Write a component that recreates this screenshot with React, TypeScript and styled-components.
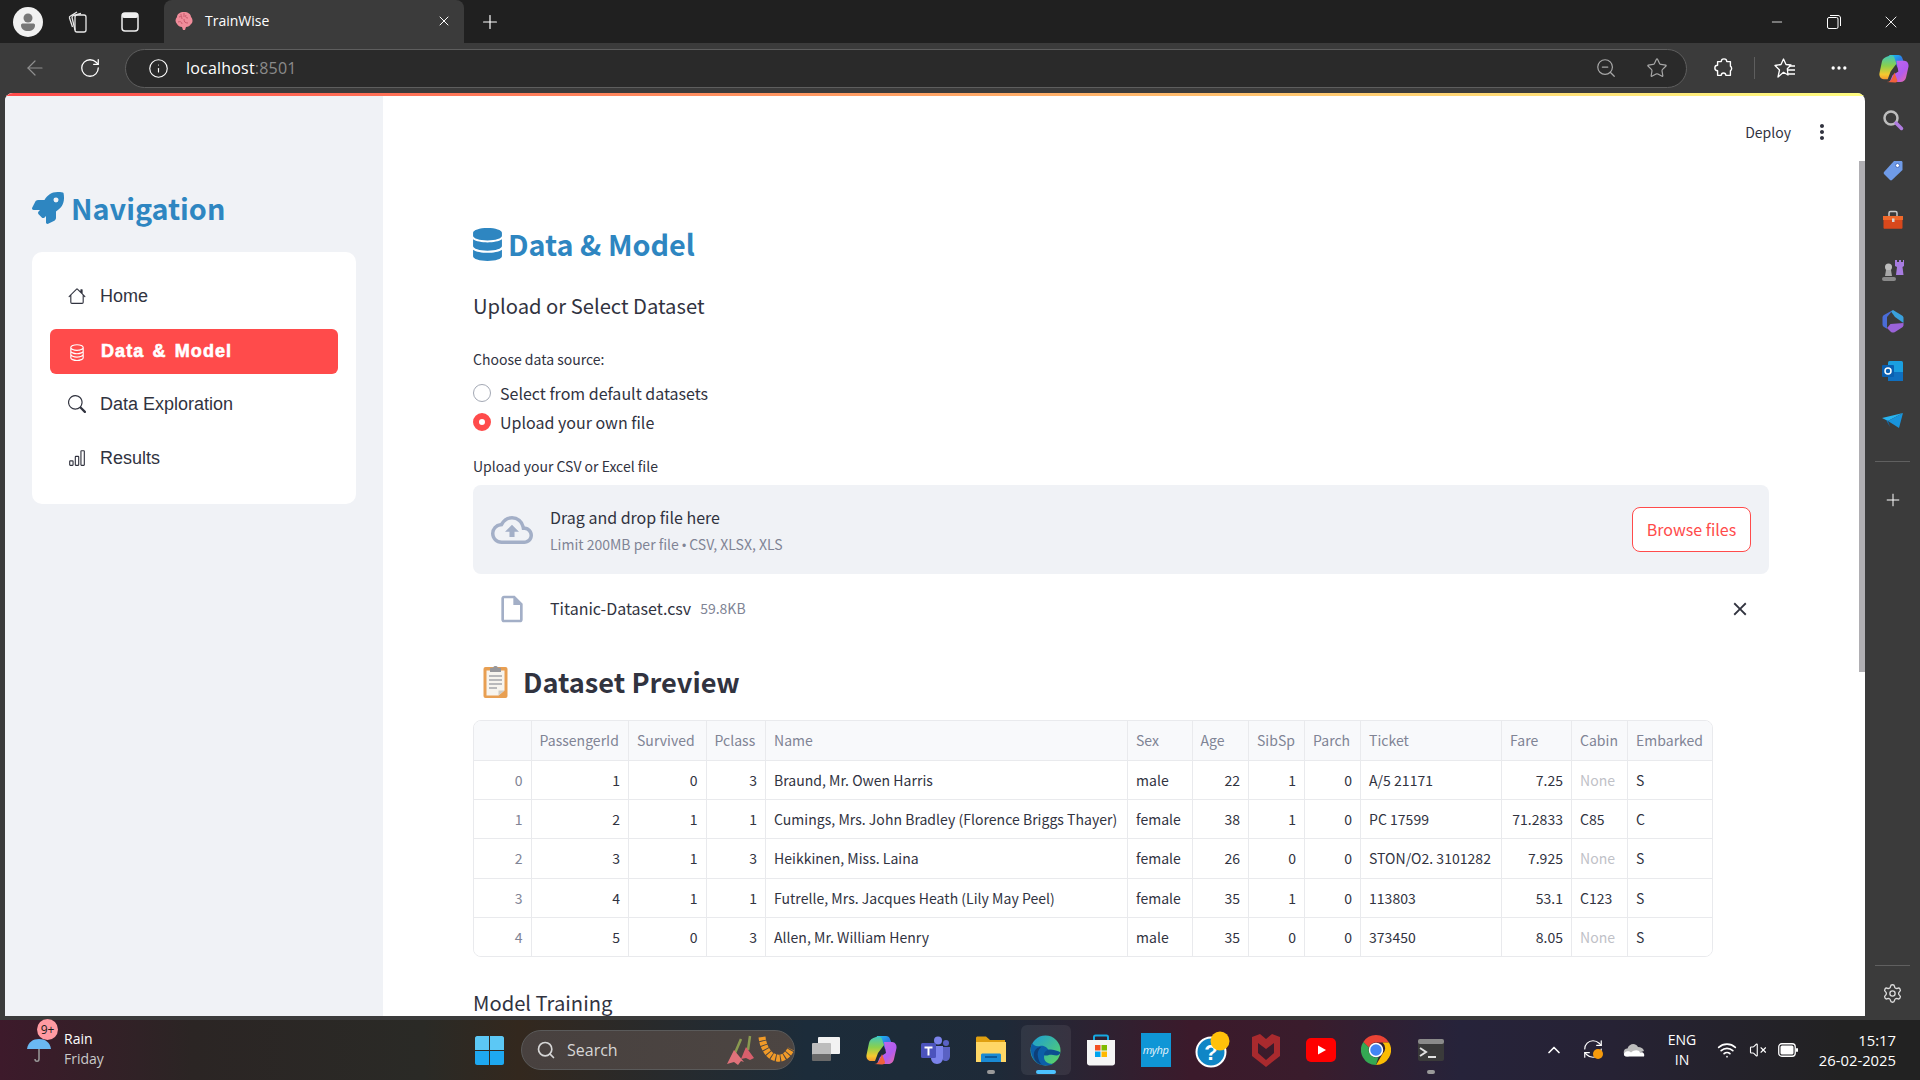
import styled, { createGlobalStyle } from 'styled-components';
import {
  ArrowLeft,
  ChevronUp,
  Info,
  Minus,
  MoreHorizontal,
  Plus,
  RefreshCw,
  RotateCw,
  Search,
  Settings,
  Star,
  VolumeX,
  Wifi,
  X,
  ZoomOut,
} from 'lucide-react';
import { BsBarChart, BsDatabase, BsHouse, BsSearch } from 'react-icons/bs';
import { FaDatabase, FaRocket } from 'react-icons/fa';
import { MdClose, MdMoreVert, MdOutlineCloudUpload, MdOutlineInsertDriveFile } from 'react-icons/md';

const SOURCE = '"Noto Sans CJK SC", "Noto Sans", sans-serif';
const SEGOE = '"Open Sans", "Noto Sans", sans-serif';
const COLS = '57.5px 97.5px 77.5px 59.5px 362px 64.5px 56.5px 56px 56px 141px 70px 56px 1fr';

const GlobalStyle = createGlobalStyle`
  * { box-sizing: border-box; }
  html, body { margin: 0; padding: 0; background: #202020; }
`;

const Screen = styled.div`
  width: 1920px;
  height: 1080px;
  display: flex;
  flex-direction: column;
  overflow: hidden;
  background: #3b3b3b;
`;

/* browser chrome */
const TitleBar = styled.div`
  height: 43px;
  flex: none;
  display: flex;
  align-items: center;
  padding-left: 3px;
  background: #202020;
  color: #fff;
`;

const Slot = styled.div<{ $w: number }>`
  width: ${(p) => p.$w}px;
  height: 100%;
  flex: none;
  display: flex;
  align-items: center;
  justify-content: center;
`;

const Avatar = styled.div`
  width: 30px;
  height: 30px;
  border-radius: 50%;
  background: #f1f1f1;
  display: flex;
  align-items: center;
  justify-content: center;
`;

const Tab = styled.div`
  width: 300px;
  height: 43px;
  margin-left: 7px;
  padding: 0 12px 2px 10px;
  display: flex;
  align-items: center;
  background: #3b3b3b;
  border-radius: 8px 8px 0 0;
  font: 400 14px ${SEGOE};
`;

const TabTitle = styled.span`
  margin-left: 11px;
  flex: 1;
`;

const WindowControls = styled.div`
  margin-left: auto;
  height: 100%;
  display: flex;
`;

const Toolbar = styled.div`
  height: 50px;
  flex: none;
  padding-left: 7.5px;
  display: flex;
  align-items: center;
  background: #3b3b3b;
  color: #fff;
`;

const AddressBar = styled.div`
  width: 1562px;
  height: 39px;
  margin: 0 10px 0 7.5px;
  padding: 0 18px 0 22px;
  flex: none;
  display: flex;
  align-items: center;
  background: #2a2a2a;
  border: 1px solid #5e5e5e;
  border-radius: 20px;
`;

const Url = styled.div`
  margin-left: 17px;
  font: 400 16px ${SEGOE};
  letter-spacing: 0.2px;
  color: #fff;
`;

const UrlPort = styled.span`
  color: #8a8a8a;
`;

const AddressActions = styled.div`
  margin-left: auto;
  display: flex;
  align-items: center;
  gap: 29px;
  color: #a8a8a8;
`;

const ToolDivider = styled.div`
  width: 7px;
  height: 22px;
  flex: none;
  display: flex;
  justify-content: center;

  &::before {
    content: '';
    width: 1px;
    background: #5e5e5e;
  }
`;

const Body = styled.div`
  height: 923px;
  flex: none;
  display: flex;
`;

const Viewport = styled.div`
  position: relative;
  width: 1860px;
  margin-left: 5px;
  flex: none;
  display: flex;
  background: #fff;
  border-radius: 8px 8px 0 0;
  overflow: hidden;

  &::before {
    content: '';
    position: absolute;
    top: 0;
    left: 0;
    right: 0;
    height: 3px;
    background: linear-gradient(90deg, #ff4b4b, #fffd80);
    z-index: 2;
  }
`;

const Scrollbar = styled.div`
  position: absolute;
  top: 68px;
  right: 0;
  width: 6px;
  height: 511px;
  background: #b0afb3;
`;

const Rail = styled.div`
  width: 55px;
  flex: none;
  padding-top: 2px;
  display: flex;
  flex-direction: column;
  align-items: center;
  color: #fff;
`;

const RailSlot = styled.div<{ $h?: number; $top?: number }>`
  width: 100%;
  height: ${(p) => p.$h ?? 50.2}px;
  margin-top: ${(p) => p.$top ?? 0}px;
  flex: none;
  display: flex;
  align-items: center;
  justify-content: center;
`;

const RailRule = styled.div<{ $top?: number; $bottom?: number }>`
  width: 35px;
  height: 1px;
  flex: none;
  margin: ${(p) => p.$top ?? 0}px 0 ${(p) => p.$bottom ?? 0}px;
  background: #606060;
`;

const RailSpacer = styled.div`
  flex: 1;
`;

/* sidebar */
const Sidebar = styled.aside`
  width: 378px;
  flex: none;
  padding: 90px 27px 0;
  background: #f0f2f6;
`;

const SideTitle = styled.h2`
  margin: 0;
  height: 52px;
  padding-bottom: 3px;
  display: flex;
  align-items: center;
  gap: 7px;
  font: 700 28.8px/49px ${SOURCE};
  color: #2e86c1;
`;

const NavCard = styled.nav`
  margin-top: 17px;
  height: 252px;
  padding: 22px 18px 0;
  display: flex;
  flex-direction: column;
  background: #fff;
  border-radius: 10px;
`;

const NavItem = styled.div<{ $active?: boolean; $top?: number }>`
  height: ${(p) => (p.$active ? 45 : 44)}px;
  margin-top: ${(p) => p.$top ?? 0}px;
  flex: none;
  padding-left: 18px;
  display: flex;
  align-items: center;
  gap: ${(p) => (p.$active ? 15 : 14)}px;
  border-radius: 6px;
  font: ${(p) => (p.$active ? 700 : 400)} 18px 'Liberation Sans', Arial, sans-serif;
  letter-spacing: ${(p) => (p.$active ? '1.1px' : '0')};
  word-spacing: ${(p) => (p.$active ? '2px' : '0')};
  -webkit-text-stroke: ${(p) => (p.$active ? '0.6px #fff' : '0')};
  color: ${(p) => (p.$active ? '#fff' : '#31333f')};
  background: ${(p) => (p.$active ? '#ff4b4b' : 'transparent')};
`;

/* main column */
const Main = styled.main`
  flex: 1;
  min-width: 0;
  padding: 0 96px 0 90px;
  font-family: ${SOURCE};
  color: #31333f;
`;

const TopBar = styled.div`
  height: 80px;
  margin-right: -96px;
  padding: 0 31px 2px 0;
  display: flex;
  align-items: center;
  justify-content: flex-end;
  gap: 19px;
  font-size: 14px;
`;

const PageTitle = styled.h1`
  margin: 52px 0 0;
  height: 40px;
  padding-bottom: 2px;
  display: flex;
  align-items: center;
  gap: 4px;
  font: 700 28.8px/38px ${SOURCE};
  color: #2e86c1;

  svg {
    margin-left: -2px;
  }
`;

const SectionTitle = styled.h3<{ $top: number }>`
  margin: ${(p) => p.$top}px 0 0;
  font: 400 20.2px/31px ${SOURCE};
  color: #31333f;
`;

const FieldLabel = styled.div<{ $top: number }>`
  margin-top: ${(p) => p.$top}px;
  font-size: 14px;
  line-height: 19px;
`;

const RadioGroup = styled.div`
  margin-top: 9px;
`;

const RadioRow = styled.div`
  height: 29px;
  display: flex;
  align-items: center;
  gap: 9px;
  font-size: 16px;
`;

const RadioDot = styled.span<{ $on?: boolean }>`
  width: 18px;
  height: 18px;
  flex: none;
  border-radius: 50%;
  background: #fff;
  border: ${(p) => (p.$on ? '6px solid #ff4b4b' : '1px solid #a3a8b4')};
`;

const DropZone = styled.div`
  margin-top: 9px;
  height: 89px;
  padding: 0 18px;
  display: flex;
  align-items: center;
  background: #f0f2f6;
  border-radius: 8px;
`;

const DropText = styled.div`
  margin-left: 17px;
  padding-top: 2px;
  flex: 1;
`;

const DropTitle = styled.div`
  font-size: 16px;
  line-height: 23px;
`;

const DropHint = styled.div`
  margin-top: 5px;
  font-size: 14px;
  line-height: 20px;
  color: #808495;
`;

const Bullet = styled.span`
  font-family: 'Liberation Sans', sans-serif;
  font-size: 12px;
`;

const BrowseButton = styled.button`
  width: 119px;
  height: 45px;
  padding: 0 0 2px;
  background: #fff;
  border: 1px solid #ff4b4b;
  border-radius: 8px;
  font: 400 16px ${SOURCE};
  color: #ff4b4b;
`;

const FileRow = styled.div`
  margin-top: 17px;
  height: 36px;
  padding: 0 18px 0 23px;
  display: flex;
  align-items: center;
`;

const FileName = styled.span`
  margin-left: 22px;
  padding-bottom: 3px;
  font-size: 16px;
`;

const FileSize = styled.span`
  margin-left: 9px;
  padding-bottom: 3px;
  font-size: 14px;
  color: #808495;
`;

const FileClose = styled.span`
  margin-left: auto;
  display: flex;
`;

const PreviewTitle = styled.h2`
  margin: 32px 0 0;
  height: 44px;
  padding-left: 10px;
  display: flex;
  align-items: center;
  gap: 15px;
  font: 600 27.2px/42px ${SOURCE};
  color: #31333f;
`;

const DataTable = styled.div`
  margin-top: 17px;
  width: 1240px;
  height: 237px;
  border: 1px solid #e9eaed;
  border-radius: 8px;
  overflow: hidden;
  font-size: 14px;
`;

const TableRow = styled.div<{ $head?: boolean }>`
  display: grid;
  grid-template-columns: ${COLS};
  height: ${(p) => (p.$head ? '40px' : '39.2px')};
  background: ${(p) => (p.$head ? '#f8f9fb' : '#fff')};
  border-bottom: 1px solid #e9eaed;

  &:last-child {
    border-bottom: 0;
  }
`;

const Cell = styled.div<{ $num?: boolean; $muted?: boolean; $none?: boolean; $head?: boolean }>`
  padding: ${(p) => (p.$head ? '0 8px 2px' : '0 8px')};
  display: flex;
  align-items: center;
  justify-content: ${(p) => (p.$num ? 'flex-end' : 'flex-start')};
  white-space: nowrap;
  overflow: hidden;
  letter-spacing: 0.03px;
  border-right: 1px solid #e9eaed;
  color: ${(p) => (p.$none ? '#bfc1c7' : p.$muted ? '#808495' : '#31333f')};

  &:last-child {
    border-right: 0;
  }
`;

/* taskbar */
const BottomEdge = styled.div`
  height: 4px;
  flex: none;
  background: #3b3b3b;
`;

const Taskbar = styled.footer`
  height: 60px;
  flex: none;
  display: flex;
  align-items: center;
  padding-right: 24px;
  color: #fff;
  font-family: ${SEGOE};
  background: linear-gradient(
    90deg,
    #3d1a2b 0%,
    #2b2524 10%,
    #2a2a26 22%,
    #33281e 27%,
    #1c2c3a 42%,
    #1e2a38 52%,
    #3b1a2b 62%,
    #3a1c2c 68%,
    #26233a 76%,
    #262234 84%,
    #222222 96%
  );
`;

const Weather = styled.div`
  position: relative;
  width: 475px;
  flex: none;
  padding-left: 26px;
  display: flex;
  align-items: center;
  gap: 12px;
`;

const WeatherBadge = styled.span`
  position: absolute;
  left: 37px;
  top: -12px;
  width: 21px;
  height: 21px;
  border-radius: 50%;
  background: #ff9aa2;
  color: #1a1a1a;
  font-size: 12px;
  line-height: 21px;
  text-align: center;
`;

const WeatherText = styled.div`
  font-size: 14px;
  line-height: 20px;
  margin-top: -2px;
`;

const Dim = styled.div`
  color: #c9c9c9;
`;

const SearchPill = styled.div`
  width: 274px;
  height: 40px;
  margin-left: 17px;
  padding: 0 0 0 14px;
  flex: none;
  display: flex;
  align-items: center;
  gap: 11px;
  border-radius: 20px;
  border: 1px solid #5a5a5a;
  background: linear-gradient(90deg, #48413f, #4c4542);
  font-size: 16px;
  color: #d6d6d6;
`;

const SearchArt = styled.span`
  margin-left: auto;
  display: flex;
`;

const TaskIcons = styled.div`
  margin-left: 3px;
  display: flex;
`;

const TaskSlot = styled.div<{ $active?: boolean; $dot?: boolean }>`
  position: relative;
  width: 55px;
  height: 50px;
  flex: none;
  display: flex;
  align-items: center;
  justify-content: center;
  border-radius: 6px;

  &::before {
    content: '';
    position: absolute;
    inset: 0 2.5px;
    border-radius: 6px;
    background: ${(p) => (p.$active ? 'rgba(255,255,255,0.07)' : 'transparent')};
  }

  &::after {
    content: '';
    display: ${(p) => (p.$active || p.$dot ? 'block' : 'none')};
    position: absolute;
    left: 50%;
    bottom: 1px;
    width: ${(p) => (p.$active ? '20px' : '8px')};
    height: 4px;
    border-radius: 2px;
    transform: translateX(-50%);
    background: ${(p) => (p.$active ? '#4cc2ff' : '#9a9a9a')};
  }

  svg {
    position: relative;
  }
`;

const Tray = styled.div`
  margin-left: auto;
  height: 100%;
  display: flex;
  align-items: center;
`;

const TrayLabel = styled.div`
  font-size: 14px;
  line-height: 20px;
  text-align: center;
`;

const Clock = styled.div`
  width: 92px;
  font-size: 14.8px;
  line-height: 20px;
  text-align: right;
`;

/* drawings */
function CopilotIcon({ id, size }: { id: string; size: number }) {
  return (
    <svg width={size} height={size} viewBox="0 0 32 32">
      <defs>
        <linearGradient id={`${id}a`} x1="0" y1="0" x2="1" y2="1">
          <stop offset="0" stopColor="#19c8ef" />
          <stop offset="0.5" stopColor="#2a7fe8" />
          <stop offset="1" stopColor="#7a55e0" />
        </linearGradient>
        <linearGradient id={`${id}b`} x1="0" y1="0" x2="0" y2="1">
          <stop offset="0" stopColor="#3fc7c0" />
          <stop offset="0.45" stopColor="#8bd04c" />
          <stop offset="0.8" stopColor="#f5c92f" />
          <stop offset="1" stopColor="#f59a2f" />
        </linearGradient>
        <linearGradient id={`${id}c`} x1="0" y1="0" x2="1" y2="1">
          <stop offset="0" stopColor="#c46be8" />
          <stop offset="0.6" stopColor="#b15cf0" />
          <stop offset="1" stopColor="#f06a9a" />
        </linearGradient>
      </defs>
      <path d="M12 2h9c2 0 3.500 1 4 3l3 8-8 2-3-8c-.6-1.600-1.500-2.500-5-3z" fill={`url(#${id}a)`} />
      <path d="M11 3c2-1.500 5-1 6 2l2 6-6 8-3 8H6c-3 0-5-2.500-4.500-6L4 9c.5-3 3-5 7-6z" fill={`url(#${id}b)`} />
      <path d="M19 8h8c3 0 5 3 4.500 6L29 25c-.5 3-3 5-6 5H12l3-7 6-4z" fill={`url(#${id}c)`} />
      <path d="M9 30c3 0 5-2 6-5l2-5 3 8c.5 1.500-1 2.500-3 2.500z" fill="#f0623c" />
    </svg>
  );
}

function BrainIcon() {
  return (
    <svg width="20" height="20" viewBox="0 0 20 20">
      <path d="M3 6c0-3 3-5 7-5s7 2 7 5c2 2 2 6 0 7-1 2-3 3-5 3l-1 3H9l-1-3c-2 0-4-1-5-3-2-2-2-5 0-7z" fill="#f08c9a" />
      <path d="M5 6c2-1 3 0 3 2M12 4c-1 2 0 3 2 3M4 11c2-1 4 0 4 2M10 8c0 3 1 4 4 4M10 2v4M7 3c0 1 0 2 1 3" fill="none" stroke="#c95a6c" strokeWidth="1" />
    </svg>
  );
}

function CollectionsIcon() {
  return (
    <svg width="20" height="22" viewBox="0 0 20 22" fill="none" stroke="#e8e8e8" strokeWidth="1.3">
      <rect x="7" y="4" width="11" height="17" rx="2" />
      <path d="M7 19 4 6.500c0-1 .5-1.700 1.500-2L13 2.500M4.500 16 1.500 7c-.3-1 .2-1.700 1-2L9 1" />
    </svg>
  );
}

function TabActionsIcon() {
  return (
    <svg width="18" height="20" viewBox="0 0 18 20">
      <rect x="1" y="1" width="16" height="18" rx="3" fill="none" stroke="#eee" strokeWidth="1.5" />
      <rect x="1" y="1" width="16" height="5" rx="2" fill="#eee" />
    </svg>
  );
}

function RestoreIcon() {
  return (
    <svg width="14" height="14" viewBox="0 0 14 14" fill="none" stroke="#fff">
      <rect x="0.5" y="2.5" width="10.5" height="11" rx="1.5" />
      <path d="M3 .5h8c1.500 0 2.500 1 2.500 2.500v8" />
    </svg>
  );
}

function ExtensionIcon() {
  return (
    <svg width="22" height="24" viewBox="0 0 24 24" fill="none" stroke="#fff" strokeWidth="1.5" strokeLinejoin="round">
      <path d="M9 5a3 3 0 0 1 6 0h4v5a3 3 0 0 1 0 5v5h-5a2.500 2.500 0 0 0-5 0H5v-5a3 3 0 0 1 0-6V5z" />
    </svg>
  );
}

function FavoritesIcon() {
  return (
    <svg width="22" height="22" viewBox="0 0 22 22" fill="none" stroke="#fff" strokeWidth="1.3" strokeLinejoin="round">
      <path d="M9.500 2 12 7.500l5 .5-3.700 3.700L14 18l-4.500-2.700L4 20l1.500-7L1 8.500 7 7.500z" />
      <path d="M15 9h6M14 13h7M14 17h7" />
    </svg>
  );
}

function SearchRailIcon() {
  return (
    <svg width="22" height="22" viewBox="0 0 22 22">
      <circle cx="9" cy="9" r="6.5" fill="none" stroke="#bdbdbd" strokeWidth="2.5" />
      <path d="M14 14l5.500 5.500" stroke="#b07ce0" strokeWidth="3.5" strokeLinecap="round" />
    </svg>
  );
}

function TagIcon() {
  return (
    <svg width="22" height="22" viewBox="0 0 22 22">
      <path d="M12 2h7c1 0 1.500.5 1.500 1.500V11L10 21c-.7.500-1.300.500-2 0l-6-6c-.5-.7-.5-1.300 0-2z" fill="#6f9be8" />
      <circle cx="15.5" cy="6.5" r="2" fill="#fff" stroke="#4a6fc0" />
    </svg>
  );
}

function ToolboxIcon() {
  return (
    <svg width="22" height="20" viewBox="0 0 22 20">
      <path d="M7 6V3c0-1 .7-1.500 1.500-1.500h5c.8 0 1.500.5 1.500 1.500v3" fill="none" stroke="#c9c9c9" strokeWidth="1.5" />
      <path d="M1 6h20v4H1z" fill="#f0682a" />
      <path d="M1.500 10h19v7.500c0 .8-.5 1.300-1.200 1.300H2.700c-.7 0-1.200-.5-1.200-1.300z" fill="#d8481c" />
      <rect x="10" y="8.5" width="2.5" height="3.5" fill="#d5d5d5" />
    </svg>
  );
}

function ChessIcon() {
  return (
    <svg width="24" height="24" viewBox="0 0 24 24">
      <path d="M14 1h2v2h2V1h2v2h2V1h1v6l-1.500 1 1 8H15l1-8-2-1z" fill="#a77ce0" />
      <circle cx="7.5" cy="8" r="3.5" fill="#bdbdbd" />
      <path d="M5 11h5l1 6H4z" fill="#a8a8a8" />
      <rect x="1" y="18" width="14" height="4" rx="2" fill="#8a8a8a" />
    </svg>
  );
}

function M365Icon() {
  return (
    <svg width="22" height="24" viewBox="0 0 22 24">
      <path d="M11 1 2 6c-1 .7-1.500 1.500-1.500 2.500v7c0 1 .5 1.800 1.500 2.500l3 1.800V8z" fill="#4a6cd8" />
      <path d="M9 2.500 11 1l9 5.500c1 .7 1.500 1.500 1.500 2.500v5L13 8z" fill="#3aa0dc" />
      <path d="M5 19l3.500-4 13-1v2c0 1-.5 1.800-1.500 2.500L13 23c-1.300.7-2.700.7-4 0z" fill="#9a63d8" />
    </svg>
  );
}

function OutlookIcon() {
  return (
    <svg width="22" height="22" viewBox="0 0 22 22">
      <rect x="6" y="1" width="15" height="20" rx="1.5" fill="#1a9fe0" />
      <path d="M6 12h15v8c0 .6-.5 1-1 1H7c-.6 0-1-.4-1-1z" fill="#0f6fc0" />
      <rect x="0" y="5" width="12" height="12" rx="1" fill="#0a5fb0" />
      <circle cx="6" cy="11" r="3" fill="none" stroke="#fff" strokeWidth="1.5" />
    </svg>
  );
}

function SendIcon() {
  return (
    <svg width="22" height="16" viewBox="0 0 22 16">
      <path d="M0 5 21 0 6 8z" fill="#28b4f0" />
      <path d="M21 0 6 8l11 7z" fill="#1994dc" />
      <path d="M4 7l2 1 2 6z" fill="#0e6cb0" />
    </svg>
  );
}

function ClipboardIcon() {
  return (
    <svg width="25" height="34" viewBox="0 0 25 34">
      <rect x="0.5" y="3" width="24" height="31" rx="2" fill="#e89f52" />
      <path d="M3.500 6.500h18v20l-6 5h-12z" fill="#f7f4ee" />
      <path d="M21.500 26.500l-6 5v-5z" fill="#cfcbc4" />
      <path d="M6 12h13M6 16h13M6 20h13M6 24h8" stroke="#a5a5ab" strokeWidth="1.5" />
      <path d="M7 8V5c0-.8.5-1.200 1.200-1.200h1.800C10.500 1.500 14.500 1.500 15 3.800h1.800c.7 0 1.200.4 1.200 1.200v3z" fill="#97979b" />
    </svg>
  );
}

function UmbrellaIcon() {
  return (
    <svg width="26" height="26" viewBox="0 0 26 26">
      <path d="M1 12C2 5 7 2 13 2s11 3 12 10z" fill="#6ab8f2" />
      <path d="M13 12v10c0 3-4 3-4 0" fill="none" stroke="#9a9a9a" strokeWidth="1.5" />
    </svg>
  );
}

function WindowsLogo() {
  return (
    <svg width="29" height="29" viewBox="0 0 29 29">
      <path d="M0 2c0-1 1-2 2-2h12v14H0z" fill="#5cc8f5" />
      <path d="M15 0h12c1 0 2 1 2 2v12H15z" fill="#5cc8f5" />
      <path d="M0 15h14v14H2c-1 0-2-1-2-2z" fill="#1ea8f0" />
      <path d="M15 15h14v12c0 1-1 2-2 2H15z" fill="#1ea8f0" />
    </svg>
  );
}

function FlowersArt() {
  return (
    <svg width="68" height="34" viewBox="0 0 68 34">
      <path d="M15 6 9 20M24 3l-2 14" stroke="#8a9a50" strokeWidth="2.5" fill="none" />
      <path d="M8 17 1 31l7-2 4 3 3-4 3 1z" fill="#e0727a" />
      <path d="M20 14l-5 12 5-1 4 2 4-2z" fill="#d85f6c" />
      <path d="M36 4c1 9 6 20 15 21 6 1 11-3 14-9" fill="none" stroke="#f09a28" strokeWidth="7" strokeDasharray="3.500 1" />
    </svg>
  );
}

function DesktopsIcon() {
  return (
    <svg width="30" height="30" viewBox="0 0 30 30">
      <rect x="7" y="2" width="22" height="17" rx="1" fill="#f2f2f2" />
      <rect x="1" y="8" width="19" height="15" rx="1" fill="#bdbdbd" />
      <rect x="1" y="19" width="19" height="7" rx="1" fill="#6a6a6a" />
    </svg>
  );
}

function TeamsIcon() {
  return (
    <svg width="30" height="30" viewBox="0 0 30 30">
      <circle cx="17" cy="5.5" r="4" fill="#7b83eb" />
      <circle cx="25" cy="8" r="3" fill="#5a62c4" />
      <path d="M21 12h8v9c0 3-2 5-4.500 5S21 24 21 21z" fill="#5a62c4" />
      <path d="M10 11h12v12c0 3-2.500 6-6 6s-6-3-6-6z" fill="#7b83eb" />
      <rect x="0" y="8" width="15" height="15" rx="1.5" fill="#4b53bc" />
      <path d="M3.500 11.500h8v2H8.500v7h-2v-7h-3z" fill="#fff" />
    </svg>
  );
}

function FolderIcon() {
  return (
    <svg width="30" height="30" viewBox="0 0 30 30">
      <path d="M0 3c0-1 .8-1.500 1.500-1.500H10L14 5h15v5H0z" fill="#e0a010" />
      <path d="M0 7h30v20H0z" fill="#ffd766" />
      <path d="M5 27v-7c0-1 .8-1.500 1.500-1.500h17c.8 0 1.500.5 1.500 1.500v7z" fill="#1a8ad4" />
      <rect x="9" y="21" width="12" height="2" fill="#0d5a9a" />
    </svg>
  );
}

function EdgeIcon() {
  return (
    <svg width="31" height="31" viewBox="0 0 31 31">
      <defs>
        <linearGradient id="edgeTop" x1="0" y1="0" x2="1" y2="1">
          <stop offset="0" stopColor="#1a9bd8" />
          <stop offset="1" stopColor="#5fd85f" />
        </linearGradient>
      </defs>
      <circle cx="15.5" cy="15.5" r="15" fill="url(#edgeTop)" />
      <path d="M2 8c-3 8 0 18 8 21.500 4 1.500 9 1.500 13-.5-6 0-9-3-9-7 0-3 2-5 5-6-1-3-5-6-9-5C6 12 3.500 10 2 8z" fill="#0c5fa8" />
      <path d="M14 20c0-3 3-6 7-5.500 4 .5 8 1.500 9.500 3-.5 1.500-2 3-4 3-3 0-5.500-1-7.500-.5S15 21 14 20z" fill="#0c4f90" />
      <path d="M12 30c-6-2-9-7-8-12 1-4 4-6 7-6-3 3-4 6-3 10 .5 3 2 6 4 8z" fill="#0e3f78" />
    </svg>
  );
}

function StoreIcon() {
  return (
    <svg width="30" height="32" viewBox="0 0 30 32">
      <path d="M8 6V3c0-1 .6-1.500 1.500-1.500h11c.9 0 1.500.5 1.500 1.500v3" fill="none" stroke="#16a8e0" strokeWidth="2" />
      <path d="M1 6h28v23c0 1.600-1.200 2.500-2.500 2.500h-23C2.200 31.500 1 30.600 1 29z" fill="#f5f5f5" />
      <rect x="9" y="11" width="5.5" height="5.5" fill="#f25022" />
      <rect x="15.5" y="11" width="5.5" height="5.5" fill="#7fba00" />
      <rect x="9" y="17.5" width="5.5" height="5.5" fill="#00a4ef" />
      <rect x="15.5" y="17.5" width="5.5" height="5.5" fill="#ffb900" />
    </svg>
  );
}

const HpTile = styled.div`
  width: 30px;
  height: 34px;
  background: #0f96d6;
  color: #e8f4fb;
  font: italic 400 11px/34px ${SEGOE};
  letter-spacing: -0.4px;
  text-align: center;
`;

function HelpIcon() {
  return (
    <svg width="38" height="38" viewBox="0 0 38 38">
      <circle cx="19" cy="21" r="14.5" fill="#0f86c6" stroke="#fff" strokeWidth="2" />
      <text x="19" y="29" textAnchor="middle" fontFamily="Liberation Sans, sans-serif" fontWeight="700" fontSize="22" fill="#fff">?</text>
      <circle cx="28" cy="10" r="9.5" fill="#ffc10a" />
    </svg>
  );
}

function McAfeeIcon() {
  return (
    <svg width="28" height="34" viewBox="0 0 28 34">
      <path d="M0 4 8 1l6 5 6-5 8 3v19L14 34 0 23zM6 10v10l8 7 8-7V10l-8 6z" fill="#a92a2e" fillRule="evenodd" />
    </svg>
  );
}

function YouTubeIcon() {
  return (
    <svg width="30" height="24" viewBox="0 0 30 24">
      <rect width="30" height="24" rx="5" fill="#f00" />
      <path d="M12 7.500 20 12l-8 4.500z" fill="#fff" />
    </svg>
  );
}

function ChromeIcon() {
  return (
    <svg width="30" height="30" viewBox="0 0 30 30">
      <path d="M15 0a15 15 0 0 1 13 7.500H15a7.500 7.500 0 0 0-7 5L2.300 7A15 15 0 0 1 15 0z" fill="#ea4335" />
      <path d="M28 7.500A15 15 0 0 1 15 30l6.500-11a7.500 7.500 0 0 0 0-11.500z" fill="#fbbc04" />
      <path d="M2.300 7 8 12.500a7.500 7.500 0 0 0 9.500 9.500L15 30A15 15 0 0 1 2.300 7z" fill="#34a853" />
      <circle cx="15" cy="15" r="6.5" fill="#4285f4" stroke="#fff" strokeWidth="1.5" />
    </svg>
  );
}

function TerminalIcon() {
  return (
    <svg width="26" height="22" viewBox="0 0 26 22">
      <rect width="26" height="22" rx="2" fill="#3a3a3a" />
      <rect width="26" height="5" rx="2" fill="#8a8a8a" />
      <path d="M2 9l6 4-6 4" fill="none" stroke="#e0e0e0" strokeWidth="2" />
      <path d="M10 18h8" stroke="#e0e0e0" strokeWidth="2" />
    </svg>
  );
}

function SyncBadgeIcon() {
  return (
    <svg width="24" height="24" viewBox="0 0 24 24">
      <g color="#fff">
        <RefreshCw size={22} strokeWidth={1.3} />
      </g>
      <circle cx="16" cy="16" r="5" fill="#f59a0c" />
    </svg>
  );
}

function OneDriveIcon() {
  return (
    <svg width="22" height="14" viewBox="0 0 22 14">
      <path d="M5 13.500a4 4 0 0 1-.5-8C6 1 12-1 15 4c3 0 5 1 6 4z" fill="#bdbdbd" />
      <path d="M3.500 13.500C1 13.500 0 11 2 9.500c2-2 5-1 6 0 3-3 8-3 9 0 3-1 5 1.500 4 4z" fill="#fff" />
    </svg>
  );
}

function BatteryIcon() {
  return (
    <svg width="20" height="14" viewBox="0 0 20 14">
      <rect x="0.75" y="0.75" width="16.5" height="12.5" rx="3" fill="none" stroke="#fff" strokeWidth="1.3" />
      <rect x="2.5" y="2.5" width="13" height="9" rx="1.5" fill="#fff" />
      <rect x="18" y="5" width="2" height="4" rx="1" fill="#fff" />
    </svg>
  );
}

type Row = string[];

const HEAD = ['', 'PassengerId', 'Survived', 'Pclass', 'Name', 'Sex', 'Age', 'SibSp', 'Parch', 'Ticket', 'Fare', 'Cabin', 'Embarked'];

const ROWS: Row[] = [
  ['0', '1', '0', '3', 'Braund, Mr. Owen Harris', 'male', '22', '1', '0', 'A/5 21171', '7.25', 'None', 'S'],
  ['1', '2', '1', '1', 'Cumings, Mrs. John Bradley (Florence Briggs Thayer)', 'female', '38', '1', '0', 'PC 17599', '71.2833', 'C85', 'C'],
  ['2', '3', '1', '3', 'Heikkinen, Miss. Laina', 'female', '26', '0', '0', 'STON/O2. 3101282', '7.925', 'None', 'S'],
  ['3', '4', '1', '1', 'Futrelle, Mrs. Jacques Heath (Lily May Peel)', 'female', '35', '1', '0', '113803', '53.1', 'C123', 'S'],
  ['4', '5', '0', '3', 'Allen, Mr. William Henry', 'male', '35', '0', '0', '373450', '8.05', 'None', 'S'],
];

const NUMERIC = [0, 1, 2, 3, 6, 7, 8, 10];

function App() {
  return (
    <Screen>
      <GlobalStyle />
      <TitleBar>
        <Slot $w={50}>
          <Avatar>
            <svg width="18" height="20" viewBox="0 0 18 20">
              <circle cx="9" cy="6" r="4.5" fill="#777" />
              <path d="M2 13c0-1 1-1.500 2-1.500h10c1 0 2 .5 2 1.500 0 4-3 6-7 6s-7-2-7-6z" fill="#777" />
            </svg>
          </Avatar>
        </Slot>
        <Slot $w={50}>
          <CollectionsIcon />
        </Slot>
        <Slot $w={54}>
          <TabActionsIcon />
        </Slot>
        <Tab>
          <BrainIcon />
          <TabTitle>TrainWise</TabTitle>
          <X size={16} strokeWidth={1.5} />
        </Tab>
        <Slot $w={52}>
          <Plus size={22} strokeWidth={1.3} />
        </Slot>
        <WindowControls>
          <Slot $w={57}>
            <Minus size={16} strokeWidth={1.2} />
          </Slot>
          <Slot $w={57}>
            <RestoreIcon />
          </Slot>
          <Slot $w={58}>
            <X size={20} strokeWidth={1.1} />
          </Slot>
        </WindowControls>
      </TitleBar>
      <Toolbar>
        <Slot $w={55}>
          <ArrowLeft size={24} strokeWidth={1.2} color="#8f8f8f" />
        </Slot>
        <Slot $w={55}>
          <RotateCw size={22} strokeWidth={1.4} />
        </Slot>
        <AddressBar>
          <Info size={21} strokeWidth={1.3} />
          <Url>
            localhost<UrlPort>:8501</UrlPort>
          </Url>
          <AddressActions>
            <ZoomOut size={22} strokeWidth={1.3} />
            <Star size={22} strokeWidth={1.3} />
          </AddressActions>
        </AddressBar>
        <Slot $w={54}>
          <ExtensionIcon />
        </Slot>
        <ToolDivider />
        <Slot $w={54}>
          <FavoritesIcon />
        </Slot>
        <Slot $w={54}>
          <MoreHorizontal size={20} />
        </Slot>
        <Slot $w={54}>
          <CopilotIcon id="edgeCopilot" size={31} />
        </Slot>
      </Toolbar>
      <Body>
        <Viewport>
          <Sidebar>
            <SideTitle>
              <FaRocket size={32} />
              Navigation
            </SideTitle>
            <NavCard>
              <NavItem>
                <BsHouse size={18} />
                Home
              </NavItem>
              <NavItem $active $top={11}>
                <BsDatabase size={18} />
                Data &amp; Model
              </NavItem>
              <NavItem $top={8}>
                <BsSearch size={18} />
                Data Exploration
              </NavItem>
              <NavItem $top={10}>
                <BsBarChart size={18} />
                Results
              </NavItem>
            </NavCard>
          </Sidebar>
          <Main>
            <TopBar>
              Deploy
              <MdMoreVert size={24} />
            </TopBar>
            <PageTitle>
              <FaDatabase size={33} />
              Data &amp; Model
            </PageTitle>
            <SectionTitle $top={25}>Upload or Select Dataset</SectionTitle>
            <FieldLabel $top={29}>Choose data source:</FieldLabel>
            <RadioGroup>
              <RadioRow>
                <RadioDot />
                Select from default datasets
              </RadioRow>
              <RadioRow>
                <RadioDot $on />
                Upload your own file
              </RadioRow>
            </RadioGroup>
            <FieldLabel $top={21}>Upload your CSV or Excel file</FieldLabel>
            <DropZone>
              <MdOutlineCloudUpload size={42} color="#a3afc7" />
              <DropText>
                <DropTitle>Drag and drop file here</DropTitle>
                <DropHint>
                  Limit 200MB per file <Bullet>•</Bullet> CSV, XLSX, XLS
                </DropHint>
              </DropText>
              <BrowseButton>Browse files</BrowseButton>
            </DropZone>
            <FileRow>
              <MdOutlineInsertDriveFile size={32} color="#a3afc7" />
              <FileName>Titanic-Dataset.csv</FileName>
              <FileSize>59.8KB</FileSize>
              <FileClose>
                <MdClose size={22} />
              </FileClose>
            </FileRow>
            <PreviewTitle>
              <ClipboardIcon />
              Dataset Preview
            </PreviewTitle>
            <DataTable>
              <TableRow $head>
                {HEAD.map((h, i) => (
                  <Cell key={i} $muted $head>
                    {h}
                  </Cell>
                ))}
              </TableRow>
              {ROWS.map((row) => (
                <TableRow key={row[0]}>
                  {row.map((v, i) => (
                    <Cell key={i} $num={NUMERIC.includes(i)} $muted={i === 0} $none={v === 'None'}>
                      {v}
                    </Cell>
                  ))}
                </TableRow>
              ))}
            </DataTable>
            <SectionTitle $top={30}>Model Training</SectionTitle>
          </Main>
          <Scrollbar />
        </Viewport>
        <Rail>
          <RailSlot><SearchRailIcon /></RailSlot>
          <RailSlot><TagIcon /></RailSlot>
          <RailSlot><ToolboxIcon /></RailSlot>
          <RailSlot><ChessIcon /></RailSlot>
          <RailSlot><M365Icon /></RailSlot>
          <RailSlot><OutlookIcon /></RailSlot>
          <RailSlot><SendIcon /></RailSlot>
          <RailRule $top={15} />
          <RailSlot $top={13}><Plus size={20} strokeWidth={1.2} /></RailSlot>
          <RailSpacer />
          <RailRule $bottom={4} />
          <RailSlot $h={46}><Settings size={21} strokeWidth={1.5} color="#dcdcdc" /></RailSlot>
        </Rail>
      </Body>
      <BottomEdge />
      <Taskbar>
        <Weather>
          <UmbrellaIcon />
          <WeatherBadge>9+</WeatherBadge>
          <WeatherText>
            Rain
            <Dim>Friday</Dim>
          </WeatherText>
        </Weather>
        <WindowsLogo />
        <SearchPill>
          <Search size={20} strokeWidth={2} />
          Search
          <SearchArt>
            <FlowersArt />
          </SearchArt>
        </SearchPill>
        <TaskIcons>
          <TaskSlot><DesktopsIcon /></TaskSlot>
          <TaskSlot><CopilotIcon id="taskCopilot" size={32} /></TaskSlot>
          <TaskSlot><TeamsIcon /></TaskSlot>
          <TaskSlot $dot><FolderIcon /></TaskSlot>
          <TaskSlot $active><EdgeIcon /></TaskSlot>
          <TaskSlot><StoreIcon /></TaskSlot>
          <TaskSlot><HpTile>myhp</HpTile></TaskSlot>
          <TaskSlot><HelpIcon /></TaskSlot>
          <TaskSlot><McAfeeIcon /></TaskSlot>
          <TaskSlot><YouTubeIcon /></TaskSlot>
          <TaskSlot><ChromeIcon /></TaskSlot>
          <TaskSlot $dot><TerminalIcon /></TaskSlot>
        </TaskIcons>
        <Tray>
          <Slot $w={40}><ChevronUp size={20} /></Slot>
          <Slot $w={40}><SyncBadgeIcon /></Slot>
          <Slot $w={40}><OneDriveIcon /></Slot>
          <Slot $w={56}>
            <TrayLabel>
              ENG
              <br />
              IN
            </TrayLabel>
          </Slot>
          <Slot $w={34}><Wifi size={20} /></Slot>
          <Slot $w={28}><VolumeX size={18} strokeWidth={1.5} /></Slot>
          <Slot $w={32}><BatteryIcon /></Slot>
          <Clock>
            15:17
            <br />
            26-02-2025
          </Clock>
        </Tray>
      </Taskbar>
    </Screen>
  );
}

export default App;
